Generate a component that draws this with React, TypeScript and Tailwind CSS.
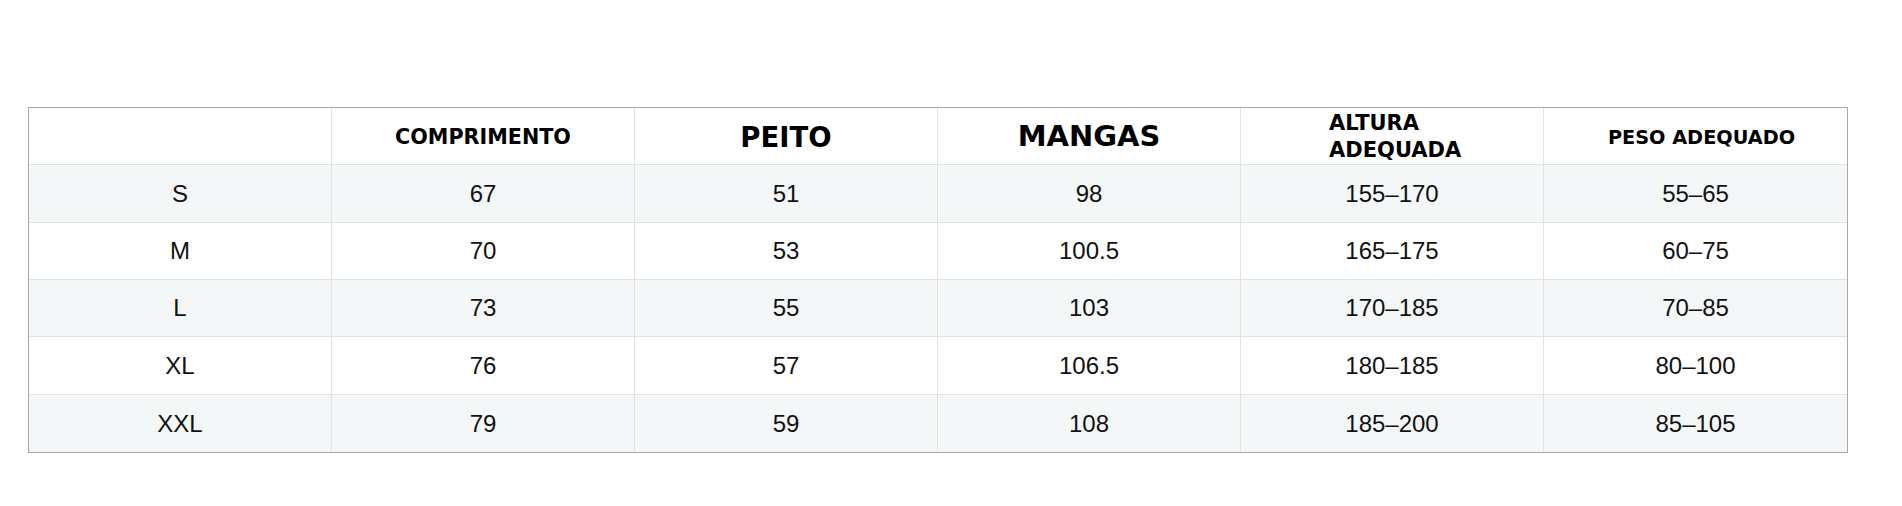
import React from "react";

const rows = [
  ["S", "67", "51", "98", "155–170", "55–65"],
  ["M", "70", "53", "100.5", "165–175", "60–75"],
  ["L", "73", "55", "103", "170–185", "70–85"],
  ["XL", "76", "57", "106.5", "180–185", "80–100"],
  ["XXL", "79", "59", "108", "185–200", "85–105"],
];

const rowH = ["h-[58px]", "h-[57px]", "h-[57px]", "h-[58px]", "h-[57px]"];

export default function App() {
  return (
    <div className="w-[1902px] h-[506px] bg-white pt-[107px] pl-[28px]">
      <div className="w-[1820px] border border-[#a9a9a9] bg-white">
        <div className="grid grid-cols-6 h-[57px] border-b border-[#e2e2e2] font-['DejaVu_Sans',sans-serif] font-bold text-black">
          <div className="border-r border-[#e2e2e2]" />
          <div className="border-r border-[#e2e2e2] flex items-center justify-center text-[20.7px] pt-[3px]">COMPRIMENTO</div>
          <div className="border-r border-[#e2e2e2] flex items-center justify-center text-[27.5px] pt-[3px]">PEITO</div>
          <div className="border-r border-[#e2e2e2] flex items-center justify-center text-[29px] pt-[2px]">MANGAS</div>
          <div className="border-r border-[#e2e2e2] flex items-center pl-[88px] text-[21px] leading-[27px] pt-[1px]">
            <div className="text-left">
              ALTURA
              <br />
              ADEQUADA
            </div>
          </div>
          <div className="flex items-center justify-center text-[19.3px] pl-[12px] pt-[4px]">PESO ADEQUADO</div>
        </div>
        {rows.map((r, i) => (
          <div
            key={i}
            className={`grid grid-cols-6 ${rowH[i]} ${i % 2 === 0 ? "bg-[#f4f7f7]" : "bg-white"} ${i < rows.length - 1 ? "border-b border-[#e2e2e2]" : ""} font-['Liberation_Sans',Arial,sans-serif] text-[24px] text-[#111]`}
          >
            {r.map((c, j) => (
              <div
                key={j}
                className={`flex items-center justify-center ${j < 5 ? "border-r border-[#e2e2e2]" : ""}`}
              >
                {c}
              </div>
            ))}
          </div>
        ))}
      </div>
    </div>
  );
}
